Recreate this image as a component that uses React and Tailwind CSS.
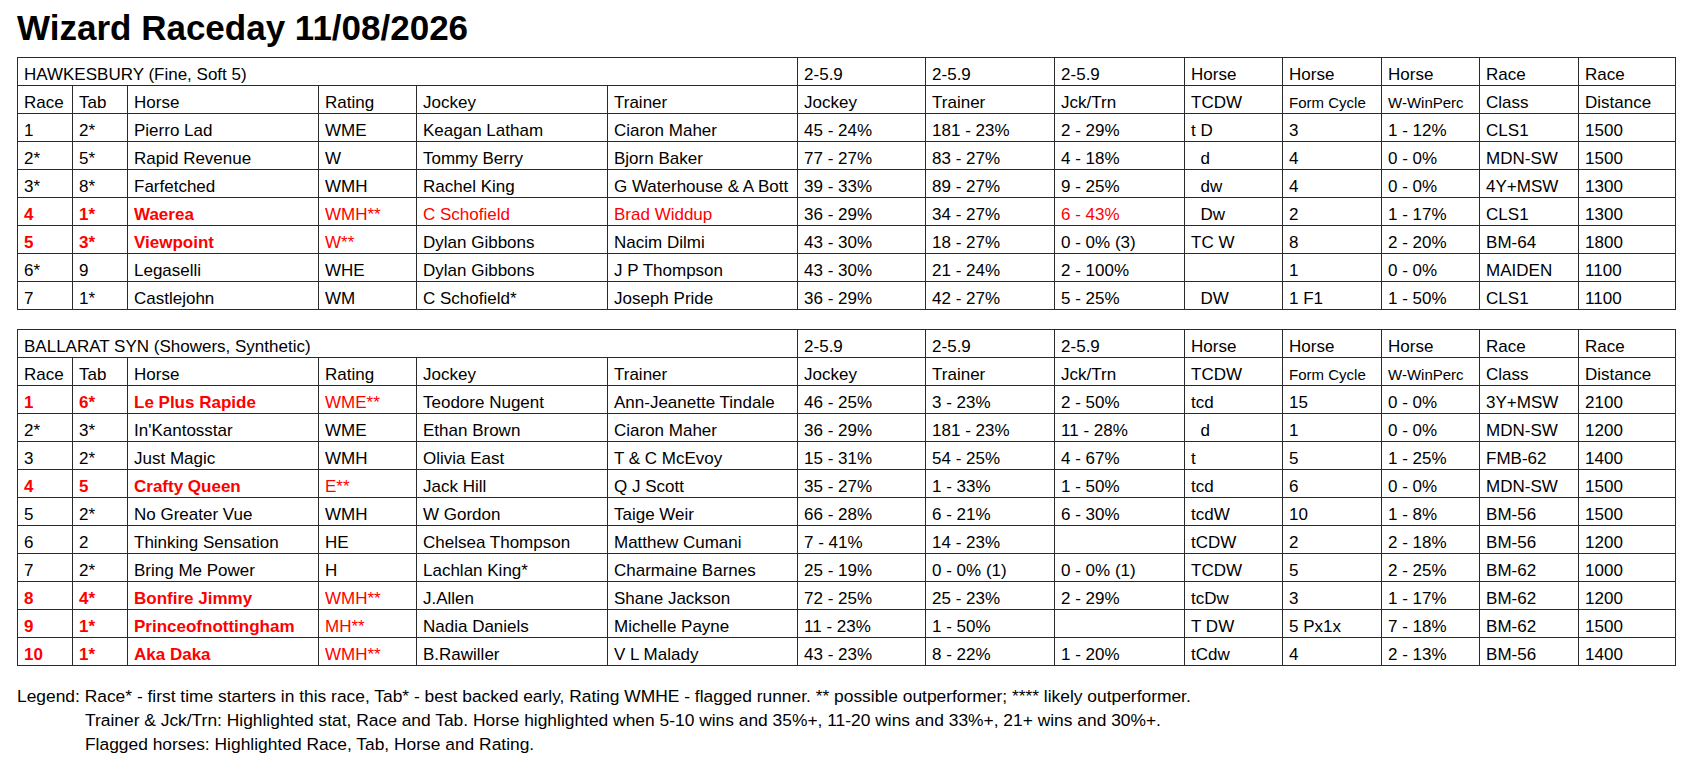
import React from "react";

const cols = [55, 55, 191, 98, 191, 190, 128, 129, 130, 98, 99, 98, 99, 97];

const hawkesbury = [
  { r: "1", t: "2*", h: "Pierro Lad", rt: "WME", j: "Keagan Latham", tr: "Ciaron Maher", js: "45 - 24%", ts: "181 - 23%", jt: "2 - 29%", tc: "t D", fc: "3", ww: "1 - 12%", cl: "CLS1", d: "1500" },
  { r: "2*", t: "5*", h: "Rapid Revenue", rt: "W", j: "Tommy Berry", tr: "Bjorn Baker", js: "77 - 27%", ts: "83 - 27%", jt: "4 - 18%", tc: "  d", fc: "4", ww: "0 - 0%", cl: "MDN-SW", d: "1500" },
  { r: "3*", t: "8*", h: "Farfetched", rt: "WMH", j: "Rachel King", tr: "G Waterhouse & A Bott", js: "39 - 33%", ts: "89 - 27%", jt: "9 - 25%", tc: "  dw", fc: "4", ww: "0 - 0%", cl: "4Y+MSW", d: "1300" },
  { r: "4", t: "1*", h: "Waerea", rt: "WMH**", j: "C Schofield", tr: "Brad Widdup", js: "36 - 29%", ts: "34 - 27%", jt: "6 - 43%", tc: "  Dw", fc: "2", ww: "1 - 17%", cl: "CLS1", d: "1300", flag: true, hj: true, ht: true, hjt: true },
  { r: "5", t: "3*", h: "Viewpoint", rt: "W**", j: "Dylan Gibbons", tr: "Nacim Dilmi", js: "43 - 30%", ts: "18 - 27%", jt: "0 - 0% (3)", tc: "TC W", fc: "8", ww: "2 - 20%", cl: "BM-64", d: "1800", flag: true },
  { r: "6*", t: "9", h: "Legaselli", rt: "WHE", j: "Dylan Gibbons", tr: "J P Thompson", js: "43 - 30%", ts: "21 - 24%", jt: "2 - 100%", tc: "", fc: "1", ww: "0 - 0%", cl: "MAIDEN", d: "1100" },
  { r: "7", t: "1*", h: "Castlejohn", rt: "WM", j: "C Schofield*", tr: "Joseph Pride", js: "36 - 29%", ts: "42 - 27%", jt: "5 - 25%", tc: "  DW", fc: "1 F1", ww: "1 - 50%", cl: "CLS1", d: "1100" },
];

const ballarat = [
  { r: "1", t: "6*", h: "Le Plus Rapide", rt: "WME**", j: "Teodore Nugent", tr: "Ann-Jeanette Tindale", js: "46 - 25%", ts: "3 - 23%", jt: "2 - 50%", tc: "tcd", fc: "15", ww: "0 - 0%", cl: "3Y+MSW", d: "2100", flag: true },
  { r: "2*", t: "3*", h: "In'Kantosstar", rt: "WME", j: "Ethan Brown", tr: "Ciaron Maher", js: "36 - 29%", ts: "181 - 23%", jt: "11 - 28%", tc: "  d", fc: "1", ww: "0 - 0%", cl: "MDN-SW", d: "1200" },
  { r: "3", t: "2*", h: "Just Magic", rt: "WMH", j: "Olivia East", tr: "T & C McEvoy", js: "15 - 31%", ts: "54 - 25%", jt: "4 - 67%", tc: "t", fc: "5", ww: "1 - 25%", cl: "FMB-62", d: "1400" },
  { r: "4", t: "5", h: "Crafty Queen", rt: "E**", j: "Jack Hill", tr: "Q J Scott", js: "35 - 27%", ts: "1 - 33%", jt: "1 - 50%", tc: "tcd", fc: "6", ww: "0 - 0%", cl: "MDN-SW", d: "1500", flag: true },
  { r: "5", t: "2*", h: "No Greater Vue", rt: "WMH", j: "W Gordon", tr: "Taige Weir", js: "66 - 28%", ts: "6 - 21%", jt: "6 - 30%", tc: "tcdW", fc: "10", ww: "1 - 8%", cl: "BM-56", d: "1500" },
  { r: "6", t: "2", h: "Thinking Sensation", rt: "HE", j: "Chelsea Thompson", tr: "Matthew Cumani", js: "7 - 41%", ts: "14 - 23%", jt: "", tc: "tCDW", fc: "2", ww: "2 - 18%", cl: "BM-56", d: "1200" },
  { r: "7", t: "2*", h: "Bring Me Power", rt: "H", j: "Lachlan King*", tr: "Charmaine Barnes", js: "25 - 19%", ts: "0 - 0% (1)", jt: "0 - 0% (1)", tc: "TCDW", fc: "5", ww: "2 - 25%", cl: "BM-62", d: "1000" },
  { r: "8", t: "4*", h: "Bonfire Jimmy", rt: "WMH**", j: "J.Allen", tr: "Shane Jackson", js: "72 - 25%", ts: "25 - 23%", jt: "2 - 29%", tc: "tcDw", fc: "3", ww: "1 - 17%", cl: "BM-62", d: "1200", flag: true },
  { r: "9", t: "1*", h: "Princeofnottingham", rt: "MH**", j: "Nadia Daniels", tr: "Michelle Payne", js: "11 - 23%", ts: "1 - 50%", jt: "", tc: "T DW", fc: "5 Px1x", ww: "7 - 18%", cl: "BM-62", d: "1500", flag: true },
  { r: "10", t: "1*", h: "Aka Daka", rt: "WMH**", j: "B.Rawiller", tr: "V L Malady", js: "43 - 23%", ts: "8 - 22%", jt: "1 - 20%", tc: "tCdw", fc: "4", ww: "2 - 13%", cl: "BM-56", d: "1400", flag: true },
];

const cell = "border border-[#2a2a2a] px-[6px] py-0 align-bottom leading-[20px] whitespace-pre overflow-hidden text-left";

const Td = ({ children, red, bold, small, span }) => (
  <td
    colSpan={span}
    className={`${cell} ${red ? "text-[#ff0000]" : "text-black"} ${bold ? "font-bold" : "font-normal"} ${small ? "text-[15px]" : ""}`}
  >
    {children}
  </td>
);

const VenueTable = ({ venue, rows }) => (
  <table className="table-fixed border-collapse w-[1658px] text-[17px]">
    <colgroup>
      {cols.map((w, i) => (
        <col key={i} style={{ width: w }} />
      ))}
    </colgroup>
    <tbody>
      <tr className="h-[28px]">
        <Td span={6}>{venue}</Td>
        <Td>2-5.9</Td>
        <Td>2-5.9</Td>
        <Td>2-5.9</Td>
        <Td>Horse</Td>
        <Td>Horse</Td>
        <Td>Horse</Td>
        <Td>Race</Td>
        <Td>Race</Td>
      </tr>
      <tr className="h-[28px]">
        <Td>Race</Td>
        <Td>Tab</Td>
        <Td>Horse</Td>
        <Td>Rating</Td>
        <Td>Jockey</Td>
        <Td>Trainer</Td>
        <Td>Jockey</Td>
        <Td>Trainer</Td>
        <Td>Jck/Trn</Td>
        <Td>TCDW</Td>
        <Td small>Form Cycle</Td>
        <Td small>W-WinPerc</Td>
        <Td>Class</Td>
        <Td>Distance</Td>
      </tr>
      {rows.map((x, i) => (
        <tr key={i} className="h-[28px]">
          <Td red={x.flag} bold={x.flag}>{x.r}</Td>
          <Td red={x.flag} bold={x.flag}>{x.t}</Td>
          <Td red={x.flag} bold={x.flag}>{x.h}</Td>
          <Td red={x.flag}>{x.rt}</Td>
          <Td red={x.hj}>{x.j}</Td>
          <Td red={x.ht}>{x.tr}</Td>
          <Td>{x.js}</Td>
          <Td>{x.ts}</Td>
          <Td red={x.hjt}>{x.jt}</Td>
          <Td>{x.tc}</Td>
          <Td>{x.fc}</Td>
          <Td>{x.ww}</Td>
          <Td>{x.cl}</Td>
          <Td>{x.d}</Td>
        </tr>
      ))}
    </tbody>
  </table>
);

export default function App() {
  return (
    <div className="min-h-screen bg-white font-['Liberation_Sans',Arial,sans-serif] text-black pl-[17px]">
      {/* Title */}
      <h1 className="pt-[8px] h-[57px] text-[35px] leading-[40px] font-bold">Wizard Raceday 11/08/2026</h1>

      <VenueTable venue="HAWKESBURY (Fine, Soft 5)" rows={hawkesbury} />

      <div className="h-[19px]" />

      <VenueTable venue="BALLARAT SYN (Showers, Synthetic)" rows={ballarat} />

      {/* Legend */}
      <div className="pt-[18px] text-[17.4px] leading-[24px]">
        <p>Legend: Race* - first time starters in this race, Tab* - best backed early, Rating WMHE - flagged runner. ** possible outperformer; **** likely outperformer.</p>
        <p className="pl-[68px]">Trainer &amp; Jck/Trn: Highlighted stat, Race and Tab. Horse highlighted when 5-10 wins and 35%+, 11-20 wins and 33%+, 21+ wins and 30%+.</p>
        <p className="pl-[68px]">Flagged horses: Highlighted Race, Tab, Horse and Rating.</p>
      </div>
    </div>
  );
}
